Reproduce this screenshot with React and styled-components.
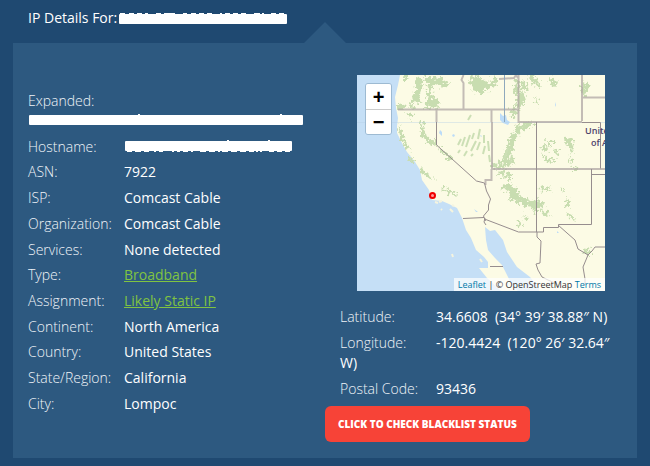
import styled, { createGlobalStyle } from "styled-components";

const GlobalStyle = createGlobalStyle`
    * {
        box-sizing: border-box;
    }
    body {
        margin: 0;
        background: #1f4971;
        color: #fff;
        font-family: "Open Sans", sans-serif;
        font-size: 14px;
        line-height: 20px;
    }
`;

const network = [
    { label: "ASN", value: "7922" },
    { label: "ISP", value: "Comcast Cable" },
    { label: "Organization", value: "Comcast Cable" },
    { label: "Services", value: "None detected" },
    { label: "Type", value: "Broadband", link: true },
    { label: "Assignment", value: "Likely Static IP", link: true },
    { label: "Continent", value: "North America" },
    { label: "Country", value: "United States" },
    { label: "State/Region", value: "California" },
    { label: "City", value: "Lompoc" },
];

const position = [
    { label: "Latitude", value: "34.6608\u00a0 (34° 39′ 38.88″ N)" },
    { label: "Longitude", value: "-120.4424\u00a0 (120° 26′ 32.64″ W)" },
    { label: "Postal Code", value: "93436" },
];

// nicks left along the edges of the blacked out values
const marks = {
    address: "M1 1h5M10 1h5M18 1h5M26 1h3M37 1h5M45 1h5M48 1h8M64 1h4M72 1h5M80 1h5M88 1h5M102 0v2M106 1h5M114 1h5M122 1h5M135 1h6M144 0v2M152 1h5M160 1h5",
    expanded: "M110 0v2M252 0v2",
    hostname:
        "M103 0v2M144 0v2M2 11h5M10 11h6M19 11h5M29 11h2M34 11h4M47 11h2M52 11h3M58 11h5M66 11h2M75 11h6M84 11h6M93 11h2M97 11h6M106 11h6M115 11h6M124 11h5M131 11h2M135 11h2M144 11h5M152 11h5M160 11h5",
};

const woods = [
    "M58 2l7 1 1 8-4 9 3 7-8 1-3-5 5-8z",
    "M66 2l10 0 12 2 4 6-6 2-8-3-4 9 3 6-5 4-3-8 2-9z",
    "M72 19l8 6 2 8-6-1-9 2 3-7z",
    "M41 27l6 4-1 4-5-1z",
    "M45 1l8 1-1 3-6 0z",
    "M54 27l5 6-3 2-4-4z",
    "M63 43l3 4 1 9 5 8 7 2 0 5-8-2-6-9-3-10z",
    "M41 50l4 6 4 12 5 5-4 2-6-9z",
    "M50 36l5 3 0 5-4-3z",
    "M82 72l8 7 6 5-3 1-9-7z",
    "M64 92l6 6 8 8-5-1-8-7zM53 80l4 5-1 4-4-5z",
    "M84 110l8 5 10 4-7 1-10-6z",
    "M114 1l9 1 7 5 0 8-8 4-6-4-4-7z",
    "M120 10l12-3 10-3-3 6-8 5-9 3z",
    "M136 1l6 3 0 6-4-3z",
    "M158 4l4 0 0 10-3 8-3-5zM162 15l6 3 1 7-4 5-3 5-3-4z",
    "M164 5l5 5 2 7-5-3zM169 0l8 0 5 8 3 5-5-2-6-6z",
    "M156 28l4 6-1 7-4 3-2-7z",
    "M160 50l13-3 5 2-9 5-6 3-3 6-4-3z",
    "M155 56l4 6-2 10-4 8-6 8-8 4 3-6 5-5 3-9 2-6z",
    "M134 88l8 1 8 2-4 3-11-1z",
    "M148 84l9-1 1 5-9 3z",
    "M225 6l5 2 1 9-3 4-4-5zM192 2l5 1 3 7-2 2-5-4z",
    "M177 22l4 3 2 5-5-3z",
    "M182 73l7-3 4 2-6 4zM189 65l8 1 1 3-7 0zM184 79l9 5 7 0-3 3-9-1zM197 73l6 5-2 3-5-5z",
    "M209 62l6 2 2 9-1 4-4-4-4-6z",
    "M213 80l3 8-2 2-2-6zM215 91l5 1 1 3-5 0z",
    "M145 111l7-3 4 4 6 4 1 6 6 5-3 4-8-5-6-2 1-7-8-3z",
    "M162 122l7 1 7 3 7-1 4 3-2 5-6 0 0 6-4-6-8-3z",
    "M181 115l6-3 7 2-4 2zM183 134l7 2 3 3-7 2z",
    "M208 123l5 2-1 8-3-3zM204 112l2 4-2 4z",
    "M208 137l7 3 4 7-6-3zM159 147l5-1 2 4-5 1zM167 138l4 6-3 1z",
    "M222 174l7 1 6-2 0 6-6-1z",
    "M140 97l7-1 3 6-5 1zM149 100l5-2 0 6-3 2z",
    "M118 0l6 0-3 2z",
];

const ranges =
    "M104 64l-3 6M108 62l-3 9M113 60l-4 12M117 58l-2 6M119 66l-5 10M123 54l-2 10M123 67l-3 8M127 60l0 8M128 71l-2 8M131 66l1 10M103 75l-2 3M110 76l-3 5M116 79l-2 2M114 40l-3 5M151 73l-4 11M155 80l-2 9M132 80l1 7";

function MapDrawing() {
    return (
        <svg
            viewBox="0 0 248 216"
            preserveAspectRatio="xMidYMid slice"
            role="img"
            aria-label="Map of the western United States"
        >
            <filter id="rough">
                <feTurbulence
                    type="fractalNoise"
                    baseFrequency="0.3"
                    numOctaves="3"
                    seed="4"
                />
                <feDisplacementMap
                    in="SourceGraphic"
                    scale="11"
                    xChannelSelector="R"
                    yChannelSelector="G"
                />
            </filter>
            <path fill="#fcfbe5" d="M0 0h248v216H0z" />
            <path
                fill="#c5dff6"
                d="M0 0h43l-2 10-3 12 1 11 2 10-1 8v7l6 12 4 7 8 10 5 8 2 10 7 10 3 10 10 1 7 3 8 4 5 10 4 12 5 8 5 12 8 7 4 5v6l-9 0 8 10 14 13H0z"
            />
            <path
                fill="#c5dff6"
                d="M128 152l5 4 5-1 8 10 4 12 10 15 13 10 9 11v3h-21l-6-6-10-20-7-7-7-8-2-10z"
            />
            <path
                fill="#bcdcf8"
                d="M143 38l3 3 3-1 1 5 3 2-2 3-5-2-3-3zM83 55l2 2 0 4-3-3zM96 59l2 1-1 2-2-1zM117 134l4 3-2 0zM123 60l2 1-1 1zM198 27l1 3-1 2zM200 156l2 2-2 0z"
            />
            <g filter="url(#rough)">
                {woods.map((d) => (
                    <path key={d} d={d} fill="#c8ddb0" />
                ))}
            </g>
            <path d={ranges} fill="none" stroke="#ccdfb5" strokeWidth="2" />
            <path
                d="M78 127l3 1M82 127l3-1M84 134l1 1M93 134l3 3M95 130l2 1M95 179l1 3M125 187l-2-3"
                stroke="#f5f4df"
                strokeWidth="2"
            />
            <path stroke="#b5d0e5" opacity="0.4" d="M0 47.5h248" />
            <g fill="none" stroke="#b0a7a5" strokeWidth="2" opacity="0.75">
                <path d="M41 34.500h121M106.500 34V8l-2-3 2-5M79.500 34v13M134.500 34v13M161.500 0v47H225M225 0v46M225 22.500h23M134.500 94v11h-6v5M134.500 94H248M135 47v47" />
                <path d="M142 4l15-1 2-3 2 3" />
            </g>
            <g fill="none" stroke="#968d8e" strokeWidth="1">
                <path d="M79.500 47v23l40 36 8 2 2 8 4 8-2 6 0 5-5 6 2 5M179.500 47v110M225 47.500h18.500v46M234.500 94v55.500h-33v3h-15v4.500h-25l-34-13M106 143.500l21-1M235 99.500h13M128 143l-1 4 2 3" />
                <path d="M180 157v5l4 4-1 22-4 1 2 6 4 7 6 3 7 3 2 4M201 150l9 8 8 7 3 9 10 6 4-4 3-4h10M231 180l-5 12 2 12v6M133 191.500h13" />
            </g>
            <path stroke="#8fa9bc" d="M147.500 0v47" />
            <text x="228" y="59">
                United States
            </text>
            <text x="234" y="71">
                of America
            </text>
            <circle
                cx="75.500"
                cy="120.500"
                r="2.500"
                fill="#f99"
                stroke="#f00000"
                strokeWidth="2"
            />
        </svg>
    );
}

function Redacted({ width, edge }) {
    return (
        <Bar width={width} height="12" role="img" aria-label="Hidden">
            <rect y="1" width={width} height="10" rx="1" fill="#fff" />
            <path d={marks[edge]} stroke="#fff" strokeWidth="2" />
        </Bar>
    );
}

function Detail({ label, value, link }) {
    return (
        <Row>
            <Label>{label}:</Label>
            {link ? <a href="#details">{value}</a> : <span>{value}</span>}
        </Row>
    );
}

function App() {
    return (
        <>
            <GlobalStyle />
            <Title>
                IP Details For:
                <Redacted width={168} edge="address" />
            </Title>
            <Panel>
                <Details>
                    <Row>
                        <Label>Expanded:</Label>
                        <Redacted width={274} edge="expanded" />
                    </Row>
                    <Row>
                        <Label>Hostname:</Label>
                        <Redacted width={167} edge="hostname" />
                    </Row>
                    {network.map((item) => (
                        <Detail key={item.label} {...item} />
                    ))}
                </Details>
                <Location>
                    <MapBox>
                        <MapDrawing />
                        <Zoom>
                            <button aria-label="Zoom in">+</button>
                            <button aria-label="Zoom out">−</button>
                        </Zoom>
                        <Attribution>
                            <a href="#leaflet">Leaflet</a> | © OpenStreetMap{" "}
                            <a href="#terms">Terms</a>
                        </Attribution>
                    </MapBox>
                    <Position>
                        {position.map((item) => (
                            <Detail key={item.label} {...item} />
                        ))}
                    </Position>
                    <CheckButton>Click to check blacklist status</CheckButton>
                </Location>
            </Panel>
        </>
    );
}

const Bar = styled.svg`
    margin-left: 1px;
    max-width: 100%;
    overflow: visible;
    vertical-align: 0;
`;

const Title = styled.h1`
    margin: 0;
    padding: 8px 28px 15px;
    font-size: 14px;
    font-weight: 400;
    ${Bar} {
        margin-left: 2px;
        vertical-align: -2px;
    }
`;

const Panel = styled.main`
    position: relative;
    display: grid;
    grid-template-columns: 1fr 1fr;
    margin: 0 13px 8px;
    padding-bottom: 16px;
    background: #2d5980;
    &::before {
        content: "";
        position: absolute;
        bottom: 100%;
        left: 50%;
        transform: translateX(-50%);
        border: 21px solid transparent;
        border-top: 0;
        border-bottom-color: #2d5980;
    }
`;

const Details = styled.section`
    display: flex;
    flex-direction: column;
    justify-content: space-between;
    padding: 48px 15px 28px;
`;

const Location = styled.section`
    padding-top: 32px;
`;

const Row = styled.div`
    a {
        color: #80c342;
    }
`;

const Label = styled.span`
    display: inline-block;
    width: 96px;
    color: #f0f4f8;
    font-weight: 300;
`;

const MapBox = styled.div`
    position: relative;
    height: 216px;
    margin: 0 32px;
    overflow: hidden;
    svg {
        display: block;
        width: 100%;
        height: 100%;
    }
    text {
        fill: #4d426b;
        font-size: 9px;
        font-weight: 600;
    }
`;

const Zoom = styled.div`
    position: absolute;
    top: 8px;
    left: 8px;
    width: 27px;
    border: 1px solid #9dbad2;
    border-radius: 3px;
    overflow: hidden;
    button {
        display: block;
        width: 100%;
        height: 25px;
        padding: 0;
        border: 0;
        background: #fff;
        color: #000;
        font: bold 20px/24px "Liberation Sans", sans-serif;
    }
    button + button {
        border-top: 1px solid #ccc;
    }
`;

const Attribution = styled.div`
    position: absolute;
    right: 0;
    bottom: 0;
    padding: 0 4px;
    background: rgba(255, 255, 255, 0.7);
    color: #333;
    font-size: 9px;
    line-height: 13px;
    white-space: nowrap;
    a {
        color: #0078a8;
        text-decoration: none;
    }
`;

const Position = styled.div`
    display: grid;
    gap: 6px;
    padding: 16px 15px 7px;
`;

const CheckButton = styled.button`
    height: 36px;
    padding: 0 13px;
    border: 0;
    border-radius: 6px;
    background: #f74337;
    color: #fff;
    font: 800 10px "Open Sans", sans-serif;
    text-transform: uppercase;
`;

export default App;
